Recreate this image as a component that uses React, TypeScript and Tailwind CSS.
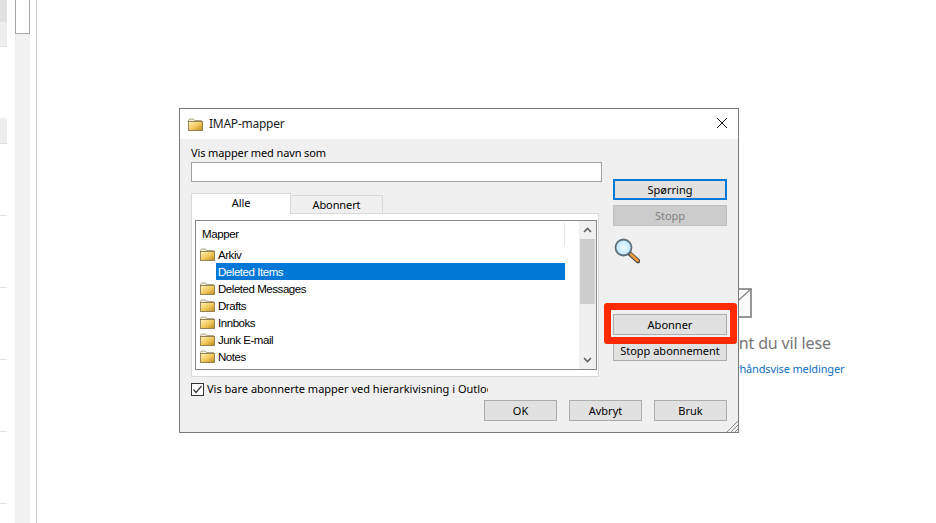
const ui = "font-['Noto_Sans',sans-serif]";

const folders = ["Arkiv", "Deleted Items", "Deleted Messages", "Drafts", "Innboks", "Junk E-mail", "Notes"];

function FolderIcon({ className = "" }: { className?: string }) {
  return (
    <svg viewBox="0 0 15 13" width="15" height="13" className={className}>
      <defs>
        <linearGradient id="fold" x1="0" y1="0" x2="1" y2="1">
          <stop offset="0" stopColor="#fff4bd" />
          <stop offset="0.55" stopColor="#f0c657" />
          <stop offset="1" stopColor="#b98a20" />
        </linearGradient>
      </defs>
      <path d="M0.5 2.5 L1.5 1 H5.5 L6.5 2.5 H13.5 V4 H0.5 Z" fill="#f3eedc" stroke="#9c8f6c" strokeWidth="0.8" />
      <rect x="0.5" y="3.5" width="14" height="9" fill="url(#fold)" stroke="#7f6e40" strokeWidth="0.8" />
    </svg>
  );
}

function Magnifier() {
  return (
    <svg viewBox="0 0 26 26" width="26" height="26">
      <defs>
        <radialGradient id="lens" cx="0.5" cy="0.5" r="0.6">
          <stop offset="0" stopColor="#f2fbff" />
          <stop offset="0.7" stopColor="#bfe8fb" />
          <stop offset="1" stopColor="#6fb6de" />
        </radialGradient>
      </defs>
      <path d="M15 15 L24 23" stroke="#4a4a4a" strokeWidth="4.6" strokeLinecap="round" />
      <path d="M17 16.5 L23.5 22.5" stroke="#ee9a3c" strokeWidth="2.8" strokeLinecap="round" />
      <circle cx="9.5" cy="9.5" r="8" fill="url(#lens)" stroke="#5f6f7c" strokeWidth="1.8" />
    </svg>
  );
}

function Btn({ children, className = "border border-[#adadad] bg-[#e1e1e1] text-black" }: { children: string; className?: string }) {
  return (
    <div className={`flex h-[21px] items-center justify-center pt-[1px] text-[11px] ${className}`}>
      {children}
    </div>
  );
}

function Sidebar() {
  return (
    <div className="flex h-[523px] w-[37px] shrink-0 border-r border-[#cccccc]">
      <div className="w-[7px]">
        <div className="h-[22px] bg-[#e0e0e0]" />
        <div className="h-[25px] border-b border-[#e0e0e0] bg-[#eeeeee]" />
        <div className="mt-[71px] h-[26px] border-b border-[#e0e0e0] bg-[#eeeeee]" />
        {[0, 1, 2, 3, 4].map((i) => (
          <div key={i} className="h-[72px] border-b border-[#e0e0e0]" />
        ))}
      </div>
      <div className="ml-2 w-[15px] bg-[#f1f1f1]">
        <div className="h-[34px] border-x border-b border-[#a6a6a6] bg-white" />
      </div>
    </div>
  );
}

function ReadingPane() {
  return (
    <div className="flex flex-1 flex-col items-center pl-[497px] pt-[288px]">
      <svg viewBox="0 0 33 30" width="33" height="30">
        <rect x="1" y="1" width="31" height="28" fill="#fafafa" stroke="#7f7f7f" strokeWidth="1.6" />
        <path d="M1 1 L16.5 15 L32 1" fill="none" stroke="#7f7f7f" strokeWidth="1.2" />
      </svg>
      <div className="mt-[14px] whitespace-nowrap text-[16px] leading-[22px] tracking-[-0.15px] text-[#767676]">Velg et element du vil lese</div>
      <div className="mt-[6px] whitespace-nowrap text-[11px] leading-[18px] tracking-[-0.15px] text-[#106ebe]">Klikk her for å alltid forhåndsvise meldinger</div>
    </div>
  );
}

function FolderList() {
  return (
    <div className="relative ml-[3px] mt-[6px] h-[150px] w-[402px] border border-[#828790] bg-white">
      <div className="ml-[6px] flex h-[25px] w-[363px] items-center justify-between pt-[2px] font-['Liberation_Sans',sans-serif] text-[11.5px] tracking-[-0.4px] text-black">
        <span>Mapper</span>
        <span className="h-[23px] w-px bg-[#e5e5e5]" />
      </div>
      <div className="font-['Liberation_Sans',sans-serif] text-[11.5px] tracking-[-0.45px]">
        {folders.map((name) => {
          const selected = name === "Deleted Items";
          return (
            <div key={name} className="flex h-[17px] items-center pl-[4px]">
              <span className="w-[15px] shrink-0">{!selected && <FolderIcon />}</span>
              <span className={`ml-[1px] flex h-[17px] w-[349px] items-center pl-[2px] pt-[3px] ${selected ? "bg-[#0078d7] text-white" : "text-black"}`}>
                {name}
              </span>
            </div>
          );
        })}
      </div>
      {/* scrollbar */}
      <div className="absolute right-0 top-0 flex h-[148px] w-[17px] flex-col items-center bg-[#f0f0f0]">
        <svg viewBox="0 0 17 18" width="17" height="18">
          <path d="M5 11 L8.5 7.5 L12 11" fill="none" stroke="#606060" strokeWidth="1.6" />
        </svg>
        <div className="h-[65px] w-[15px] bg-[#cdcdcd]" />
        <div className="flex-1" />
        <svg viewBox="0 0 17 18" width="17" height="18">
          <path d="M5 7 L8.5 10.5 L12 7" fill="none" stroke="#606060" strokeWidth="1.6" />
        </svg>
      </div>
    </div>
  );
}

function Dialog() {
  return (
    <div className={`absolute left-[179px] top-[108px] h-[325px] w-[560px] border border-[#7a7a7a] bg-[#f0f0f0] ${ui}`}>
      <div className="flex h-[30px] items-center justify-between bg-white pl-[8px] pr-[10px]">
        <div className="flex items-center gap-[6px]">
          <FolderIcon />
          <span className="text-[12px] tracking-[-0.25px] text-[#1a1a1a]">IMAP-mapper</span>
        </div>
        <svg viewBox="0 0 12 12" width="12" height="12" className="mb-[2px]">
          <path d="M1 1 L11 11 M11 1 L1 11" stroke="#111111" strokeWidth="1" />
        </svg>
      </div>
      <div className="flex pl-[11px] pr-[11px]">
        <div className="w-[411px]">
          <div className="mt-[5px] h-[18px] text-[11px] leading-[17px] tracking-[-0.12px] text-black">Vis mapper med navn som</div>
          <div className="h-[20px] border border-[#a0a0a0] bg-white" />
          <div className="mt-[11px] flex h-[20px] items-start text-[11px] tracking-[-0.1px] text-black">
            <div className="relative z-10 flex h-[21px] w-[100px] items-center justify-center border-x border-t border-[#d9d9d9] bg-white pb-[1px]">Alle</div>
            <div className="mt-[2px] flex h-[18px] w-[92px] items-center justify-center border-r border-t border-[#d9d9d9] bg-[#f0f0f0] pt-[1px]">Abonnert</div>
          </div>
          <div className="h-[164px] w-[408px] border border-[#d9d9d9] bg-white">
            <FolderList />
          </div>
          <div className="mt-[6px] flex h-[13px] items-center">
            <svg viewBox="0 0 13 13" width="13" height="13" className="shrink-0">
              <rect x="0.5" y="0.5" width="12" height="12" fill="white" stroke="#333333" />
              <path d="M2.5 6.5 L5 9.5 L10.5 3" fill="none" stroke="#333333" strokeWidth="1.2" />
            </svg>
            <span className="ml-[3px] w-[281px] overflow-hidden whitespace-nowrap text-[11px] text-black">
              Vis bare abonnerte mapper ved hierarkivisning i Outlook
            </span>
          </div>
        </div>
        <div className="ml-[11px] w-[114px] pt-[40px]">
          <Btn className="border-2 border-[#0078d7] bg-[#e1e1e1] text-black">Spørring</Btn>
          <Btn className="mt-[5px] border border-[#bfbfbf] bg-[#cccccc] text-[#838383]">Stopp</Btn>
          <div className="mt-[12px] h-[76px] pl-[1px]">
            <Magnifier />
          </div>
          <Btn>Abonner</Btn>
          <Btn className="mt-[5px] border border-[#adadad] bg-[#e1e1e1] text-black">Stopp abonnement</Btn>
        </div>
      </div>
      <div className="absolute bottom-[11px] right-[11px] flex gap-[12px]">
        <Btn className="w-[73px] border border-[#adadad] bg-[#e1e1e1] text-black">OK</Btn>
        <Btn className="w-[73px] border border-[#adadad] bg-[#e1e1e1] text-black">Avbryt</Btn>
        <Btn className="w-[73px] border border-[#adadad] bg-[#e1e1e1] text-black">Bruk</Btn>
      </div>
      <svg viewBox="0 0 11 11" width="11" height="11" className="absolute bottom-0 right-0">
        <path d="M0 11 L11 0 M4 11 L11 4 M8 11 L11 8" stroke="#8a8a8a" strokeWidth="1" />
      </svg>
    </div>
  );
}

export default function App() {
  return (
    <div className={`relative flex h-[523px] w-[936px] overflow-hidden bg-white ${ui}`}>
      <Sidebar />
      <ReadingPane />
      <Dialog />
      {/* red highlight drawn over the screenshot */}
      <div className="absolute left-[604px] top-[303px] h-[41px] w-[133px] rounded-[3px] border-[7px] border-[#ff2a00]" />
    </div>
  );
}
